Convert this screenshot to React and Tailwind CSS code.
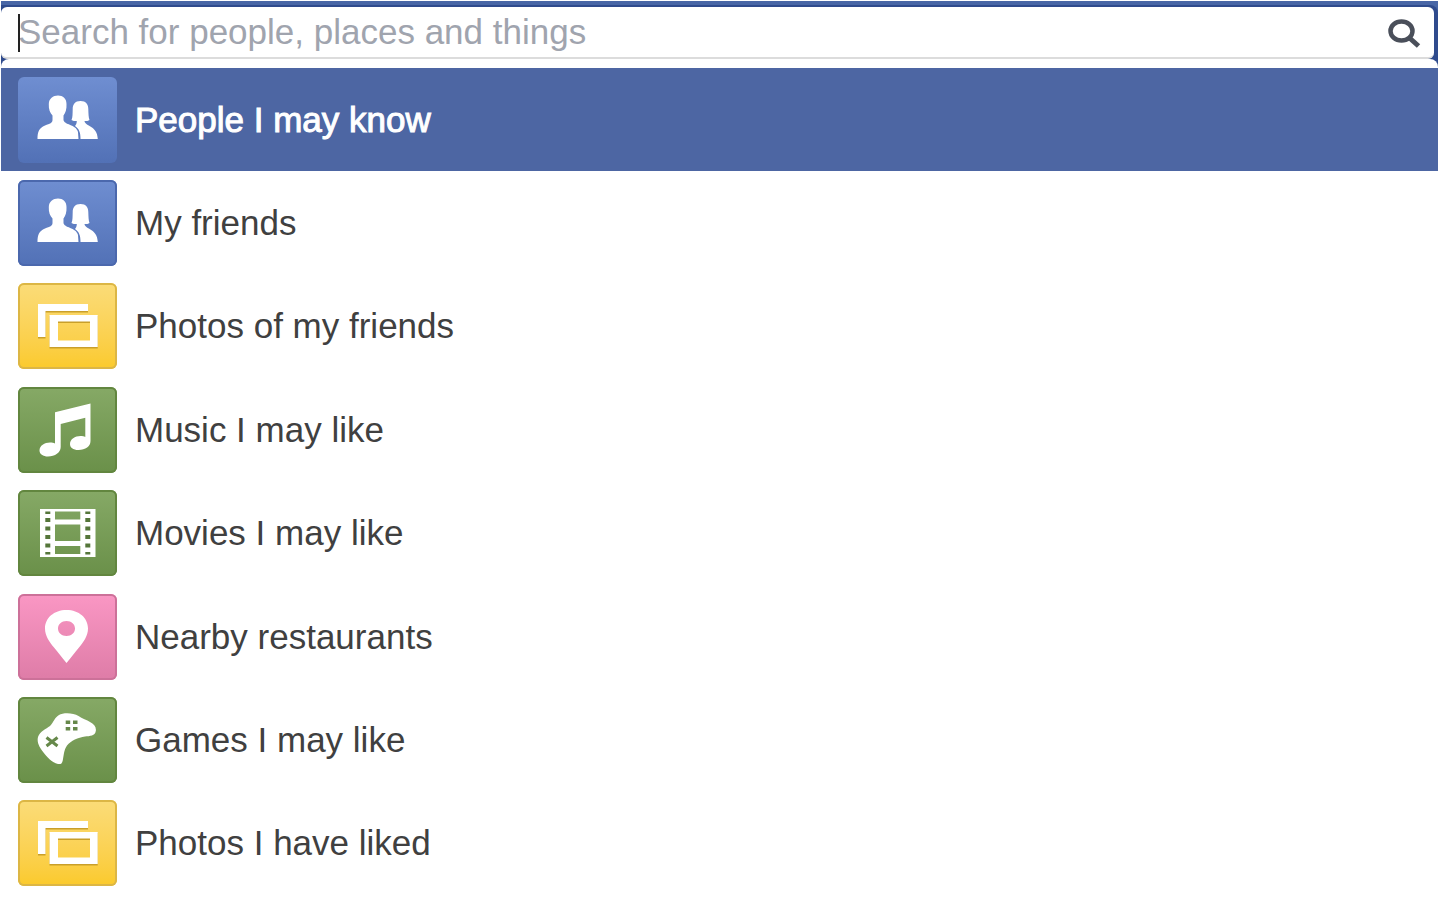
import clsx from 'clsx';

function FriendsIcon() {
  return (
    <svg viewBox="0 0 99 86" className="h-full w-full fill-white" aria-hidden="true">
      <path d="M40 18.5C45 18.5 48.5 21.5 48.5 27C48.8 32 47.5 36 45.5 38.5V43C46 48 58 47 60 55L60.5 62H19.5C19.5 55 21 51 27 48.5C32 46.5 34.5 46 34.5 43V38.5C32 36 30.5 32 30.8 27C31 21.5 35 18.5 40 18.5Z" />
      <path d="M62.5 24C68 24 70.3 27.5 70.3 32C70.5 37 70.5 40 71.5 43C70.5 44 68.5 44 66.5 44C67 49.5 79.5 48.5 79.8 62H62.5C62.5 56 61.5 52 57 49C58 48 58.8 46 58.8 44C57 44 54.500 44 53.5 43C54.8 40 54.5 37 54.7 32C54.8 27.5 57 24 62.5 24Z" />
    </svg>
  );
}

function PhotosIcon() {
  return (
    <svg viewBox="0 0 99 86" className="h-full w-full" aria-hidden="true">
      <g className="fill-[#c99f2a]">
        <path d="M20 22H70V29.5H27.5V55.5H20Z" />
        <path fillRule="evenodd" d="M31.5 33H79.7V65.5H31.5ZM40 40H72V58.5H40Z" />
      </g>
      <g className="fill-white">
        <path d="M20 21H70V28H27.5V54H20Z" />
        <path fillRule="evenodd" d="M31.5 32H79.7V64H31.5ZM40 38.5H72V57.5H40Z" />
      </g>
    </svg>
  );
}

function MusicIcon() {
  return (
    <svg viewBox="0 0 99 86" className="h-full w-full fill-white" aria-hidden="true">
      <path d="M37 25.3L72.5 16.5V54C72.5 59.5 67.5 63 60.5 63C55 63 52 60.5 52 57C52 52 57 49 62.5 49C64.5 49 66 49.3 67.3 50V30.7L42.7 37V60C42.7 65.5 37 69.5 30 69.5C25 69.5 21.5 67 21.5 63.5C21.5 58.5 26.5 55.5 32 55.5C34 55.5 35.7 55.8 37 56.5Z" />
    </svg>
  );
}

function MoviesIcon() {
  const holes = [28, 36.5, 45, 53.5];

  return (
    <svg viewBox="0 0 99 86" className="h-full w-full" aria-hidden="true">
      <path
        className="fill-white"
        fillRule="evenodd"
        d="M22 19H77.5V67H22ZM37 21.5V29.5H62.3V21.5ZM37 34.5V51H62.3V34.5ZM37 56V64H62.3V56Z"
      />
      <g className="fill-[#55763a]">
        {[27.3, 67.3].map((x) => (
          <g key={x}>
            <rect x={x} y="21.5" width="5" height="2.5" />
            {holes.map((y) => (
              <rect key={y} x={x} y={y} width="5" height="4" />
            ))}
            <rect x={x} y="62" width="5" height="2.5" />
          </g>
        ))}
      </g>
    </svg>
  );
}

function PlaceIcon() {
  return (
    <svg viewBox="0 0 99 86" className="h-full w-full fill-white" aria-hidden="true">
      <path
        fillRule="evenodd"
        d="M48.5 16C61 16 70 24 70 34.5C70 42 65.5 48 61 53.5C57 58.5 52.5 64 48.5 69C44.5 64 40 58.5 36 53.5C31.5 48 27 42 27 34.5C27 24 36 16 48.5 16ZM48.5 27C43.5 27 40 30.2 40 34.5C40 38.8 43.5 42 48.5 42C53.5 42 57 38.8 57 34.5C57 30.2 53.5 27 48.5 27Z"
      />
    </svg>
  );
}

function GamesIcon() {
  return (
    <svg viewBox="0 0 99 86" className="h-full w-full" aria-hidden="true">
      <path
        className="fill-white"
        d="M20 40C22 34 28 32 32 29C36 25 36 21 41 18C45 15.5 55 15.5 60.5 19C64 21.5 69 23 72 25C76 27 78.5 30 77.8 34C77 39 72 39 67 39.5C60 40.5 53 43.5 49 48.5C46 53 46 57 45 62C44.5 66.5 43 67.5 40 67C34 65.5 29 60 25.5 55.5C22 51 18.5 46 20 40Z"
      />
      <g className="fill-[#66884a]">
        <rect x="47.7" y="23.5" width="4.5" height="3.5" />
        <rect x="55" y="23.5" width="4.5" height="3.5" />
        <rect x="47.7" y="30" width="4.5" height="3.5" />
        <rect x="55" y="30" width="4.5" height="3.5" />
      </g>
      <path className="stroke-[#66884a]" strokeWidth="3" d="M28.5 40.5L39.5 49M39.5 40.5L28.5 49" />
    </svg>
  );
}

const BLUE = 'inset-ring-[#4b68ad] from-[#6f8ed1] to-[#5271b6]';
const YELLOW = 'inset-ring-[#dcb645] from-[#fbdc78] to-[#fbca2a]';
const GREEN = 'inset-ring-[#62863f] from-[#86a966] to-[#6a9049]';
const PINK = 'inset-ring-[#cc7199] from-[#fa97c4] to-[#de7ca7]';

const suggestions = [
  { label: 'People I may know', Icon: FriendsIcon, color: BLUE, selected: true },
  { label: 'My friends', Icon: FriendsIcon, color: BLUE },
  { label: 'Photos of my friends', Icon: PhotosIcon, color: YELLOW },
  { label: 'Music I may like', Icon: MusicIcon, color: GREEN },
  { label: 'Movies I may like', Icon: MoviesIcon, color: GREEN },
  { label: 'Nearby restaurants', Icon: PlaceIcon, color: PINK },
  { label: 'Games I may like', Icon: GamesIcon, color: GREEN },
  { label: 'Photos I have liked', Icon: PhotosIcon, color: YELLOW },
];

function SearchBar() {
  return (
    <header className="bg-[#4866a6] pt-1">
      <form className="rounded-tr-lg border-t-2 border-r-4 border-[#2f4b8d] bg-[#2f4b8d]">
        <div className="relative flex h-13 items-center rounded-md border-b-2 border-[#dcdcdc] bg-white pr-3 pl-[17px]">
          <span className="absolute top-[7px] left-[17px] h-[38px] w-[2px] bg-[#222]" />
          <input
            type="text"
            aria-label="Search"
            placeholder="Search for people, places and things"
            className="min-w-0 flex-1 bg-transparent text-[35px] leading-[40px] text-[#404040] outline-none placeholder:text-[#a0a4ae]"
          />
          <button type="submit" aria-label="Submit search" className="h-8 w-9 shrink-0">
            <svg viewBox="0 0 36 32" className="h-full w-full fill-none stroke-[#4a4f5a]">
              <ellipse cx="15.5" cy="15" rx="11" ry="9.5" strokeWidth="4.5" />
              <path d="M23 21.5L32.5 30" strokeWidth="5" />
            </svg>
          </button>
        </div>
      </form>
      <div className="bg-[#2f4b8d]">
        <div className="h-[9px] rounded-t-lg bg-white" />
      </div>
    </header>
  );
}

function Suggestion({ label, Icon, color, selected }) {
  return (
    <li className="flex">
      <a
        href="#"
        className={clsx(
          'flex flex-1 items-center gap-[18px] px-[17px] text-[35px] leading-[40px]',
          selected ? 'bg-[#4d66a3] text-white [-webkit-text-stroke:1px_white]' : 'text-[#404040]'
        )}
      >
        <span
          className={clsx(
            'h-[86px] w-[99px] shrink-0 overflow-hidden rounded-md bg-linear-to-b',
            color,
            !selected && 'inset-ring-2'
          )}
        >
          <Icon />
        </span>
        {label}
      </a>
    </li>
  );
}

function App() {
  return (
    <main className="flex min-h-screen flex-col bg-white px-px pt-px pb-2 font-['Liberation_Sans',Arial,sans-serif]">
      <SearchBar />
      <ul className="grid flex-1 grid-rows-8">
        {suggestions.map((item) => (
          <Suggestion key={item.label} {...item} />
        ))}
      </ul>
    </main>
  );
}

export default App;
